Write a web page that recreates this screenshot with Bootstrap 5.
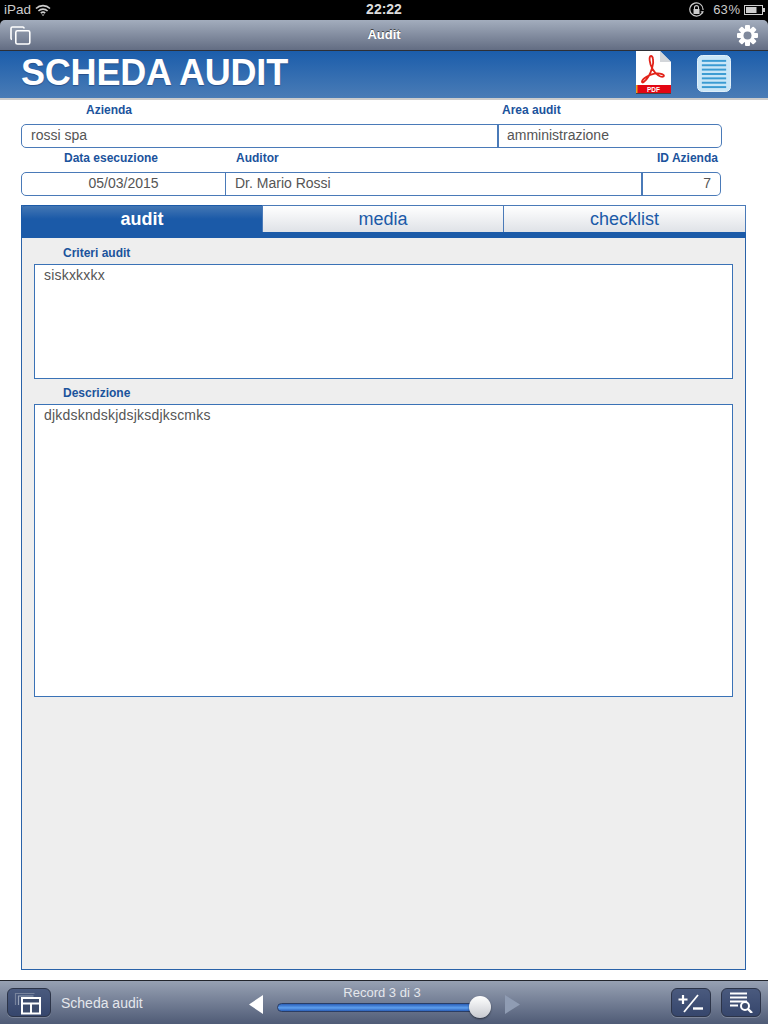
<!DOCTYPE html>
<html lang="it">
<head>
<meta charset="utf-8">
<title>Scheda audit</title>
<link href="https://cdn.jsdelivr.net/npm/bootstrap@5.3.0/dist/css/bootstrap.min.css" rel="stylesheet">
<style>
html,body{height:1024px;overflow:hidden;background:#fff}
body{font-family:"Liberation Sans",Arial,sans-serif;width:768px}
.shell{height:1024px}
.statusbar{height:20px;background:#000;color:#ccc;font-size:13.5px;line-height:18px;padding:0 3px 0 4px;flex:none;position:relative}
.statusbar .clock{position:absolute;left:0;right:0;text-align:center;color:#ddd;font-weight:700;font-size:14px;top:0}
.topnav{height:31px;flex:none;background:linear-gradient(#a3adbd,#636d83);border-bottom:1px solid #2d2f36;border-radius:5px 5px 0 0;color:#fff;padding:0 10px 0 10px;position:relative}
.topwrap{background:#000;flex:none}
.topnav .ttl{position:absolute;left:0;right:0;text-align:center;font-size:13px;font-weight:700;text-shadow:0 -1px 0 #444;line-height:30px}
.bluehead{height:47px;flex:none;background:linear-gradient(#1b5dab,#4a7cb6);padding:0 37px 0 21px}
.headtitle{font-size:36px;font-weight:700;color:#fff;letter-spacing:-.2px;line-height:44px;margin:-4px 0 0;text-shadow:0 1px 1px #28508a}
.headline{height:2px;flex:none;background:#ccc}
.fieldsbox{padding:0 0 0 21px;flex:none}
.lbl{font-size:12px;font-weight:700;color:#1b539c;line-height:14px}
.lblrow{height:24px;padding-top:3px}
.cellbox{height:24px;border:1px solid #4a7ab8;background:#fff;color:#555;font-size:14px;line-height:20px;padding:0 9px;margin-left:-1px;flex:none}
.cellbox:first-child{margin-left:0;border-radius:5px 0 0 5px}
.cellbox:last-child{border-radius:0 5px 5px 0}
.w-az{width:477px}.w-ar{width:225px;border-left-width:2px;padding-left:8px}
.w-da{width:205px;text-align:center}.w-au{width:417px}.w-id{width:80px;text-align:right;border-left-width:2px}
.l-az{padding-left:65px;width:481px}
.l-da{padding-left:43px;width:215px}.l-au{width:421px}
.panelbox{margin:9px 22px 0 21px;flex:1 1 auto;background:#eee;border:1px solid #2a62a8;min-height:0}
.tabstrip{height:27px;margin:-1px -1px 0;flex-wrap:nowrap}
.tabstrip .nav-item{flex:none}
.tabstrip .nav-link{height:27px;width:241px;padding:0;text-align:center;font-size:18px;line-height:26px;color:#1b5aa8;background:linear-gradient(#fff,#dfe2e7);border:1px solid #4a7ab8;border-width:1px 0 0 1px;border-radius:0}
.tabstrip .nav-item:last-child .nav-link{width:243px;border-right:1px solid #4a7ab8}
.tabstrip .nav-link.active{background:linear-gradient(#4477b4,#1b5aa8 50%);color:#fff;font-weight:700;border-color:#1b5aa8;border-radius:5px 0 0 0;height:27px}
.tabbar{height:6px;background:#1b5aa8;margin:0 -1px;flex:none}
.panelbody{padding:0 12px}
.lbl2{padding:8px 0 4px 29px;height:26px}
.lbl2.next{height:25px;padding-top:7px}
.boxarea{background:#fff;border:1px solid #3a72b6;color:#555;font-size:14px;line-height:20px;padding:0 9px;border-radius:0;letter-spacing:.2px}
.h1a{height:115px}.h2a{height:293px}
.footbar{height:44px;flex:none;background:linear-gradient(#97a1b3,#4f5b76);border-top:1px solid #22252c;position:relative;padding:7px;margin-top:10px}
.toolbtn{width:44px;height:29px;padding:0;border:1px solid #2c3448;border-radius:6px;background:linear-gradient(#4a5a7e,#36466c);flex:none;box-shadow:0 1px 0 rgba(255,255,255,.2)}
.toolbtn.narrow{width:40px}
.footlabel{color:#e4e7ec;font-size:14px;margin-left:10px;width:188px;flex:none;line-height:14px}
.slidewrap{width:203px;height:36px;position:relative;margin:0 14px;flex:none}
.recordtxt{font-size:13px;color:#e4e7ec;text-align:center;line-height:14px;margin-top:1px;padding-left:7px}
.tracker{height:9px;border-radius:5px;margin-top:3px;background:linear-gradient(#2a5fb8,#5fa0ee 55%,#2a5fb8);border:1px solid #2b3d63}
.knob{position:absolute;width:22px;height:22px;border-radius:50%;right:-11px;top:11px;background:linear-gradient(#fff,#c8cad0);box-shadow:0 1px 2px rgba(0,0,0,.5)}
.rightbtns{margin-left:auto}
.arrowpad{width:14px;flex:none;margin-top:3px}
.arrownext{margin-left:11px}
.btnnext{margin-left:10px}
.pct{font-size:13px;word-spacing:-3px}
.pageicon{margin-top:-4px}
.listicon{margin-left:26px;margin-top:-2px}
</style>
</head>
<body>
<div class="shell d-flex flex-column">

  <div class="statusbar d-flex align-items-center">
    <span>iPad</span>
    <svg class="ms-1" width="16" height="12" viewBox="0 0 16 12"><path d="M1 4.500a10 10 0 0 1 14 0M3.400 7a6.600 6.600 0 0 1 9.200 0M5.800 9.200a3.200 3.200 0 0 1 4.400 0" fill="none" stroke="#ccc" stroke-width="1.600"/><path d="M8 12l-1.500-1.600h3z" fill="#ccc"/></svg>
    <div class="clock">22:22</div>
    <div class="ms-auto d-flex align-items-center">
      <svg width="17" height="16" viewBox="0 0 16 16"><path d="M13.500 11A6.600 6.600 0 1 1 14.500 8" fill="none" stroke="#ccc" stroke-width="1.200"/><path d="M12 9.500l2.300 2.400.9-3z" fill="#ccc"/><rect x="5" y="7" width="6" height="5" fill="#ccc"/><path d="M6 7V5.600a2 2 0 0 1 4 0V7" fill="none" stroke="#ccc" stroke-width="1.100"/></svg>
      <span class="ms-2 pct">63 %</span>
      <svg class="ms-1" width="21" height="10" viewBox="0 0 21 10"><rect x=".5" y=".5" width="18" height="9" fill="none" stroke="#ccc"/><rect x="2" y="2" width="10.500" height="6" fill="#ccc"/><rect x="19" y="3" width="2" height="4" fill="#ccc"/></svg>
    </div>
  </div>

  <div class="topwrap">
    <div class="topnav d-flex align-items-center justify-content-between">
      <div class="ttl">Audit</div>
      <svg width="21" height="19" viewBox="0 0 21 19" fill="none" stroke="#fff" stroke-width="1.600"><path d="M14 2.500V2a1.200 1.200 0 0 0-1.200-1H2.400A1.400 1.400 0 0 0 1 2.400v9.800a1.200 1.200 0 0 0 1 1.200"/><rect x="5.800" y="4.800" width="14" height="13.200" rx="1.600"/></svg>
      <svg width="21" height="21" viewBox="0 0 20 20"><g fill="#fff"><circle cx="10" cy="10" r="7"/><rect x="7.600" y="0" width="4.800" height="20" rx="1"/><rect x="7.600" y="0" width="4.800" height="20" rx="1" transform="rotate(45 10 10)"/><rect x="7.600" y="0" width="4.800" height="20" rx="1" transform="rotate(90 10 10)"/><rect x="7.600" y="0" width="4.800" height="20" rx="1" transform="rotate(135 10 10)"/></g><circle cx="10" cy="10" r="3.800" fill="#7f899c"/></svg>
    </div>
  </div>

  <div class="bluehead d-flex align-items-center">
    <h1 class="headtitle">SCHEDA AUDIT</h1>
    <svg class="ms-auto pageicon" width="35" height="43" viewBox="0 0 35 43">
      <path d="M0 0h24l11 11v32H0z" fill="#fff"/>
      <path d="M24 0l11 11H24z" fill="#d3d6da"/>
      <rect x="0" y="34" width="35" height="8" fill="#e30613"/>
      <rect x="0" y="42" width="35" height="1" fill="#444"/>
      <rect x="0" y="34" width="1.500" height="8" fill="#f0a020"/>
      <path d="M15 5c-2.500 0-1.500 8 1.500 13 2.800 5 8.500 9 11 7.500 2-1.400-3-4-9-2.800-6 1.200-12 5-12.500 7.800-.3 2.500 3.500 0 6.500-5 2.800-4.600 5.500-13 4.500-17.500-.3-1.800-1.200-3-2-3z" fill="none" stroke="#e2231a" stroke-width="1.800"/>
      <text x="17.500" y="41" text-anchor="middle" font-size="6.500" font-weight="700" fill="#fff" font-family="Liberation Sans">PDF</text>
    </svg>
    <svg class="listicon" width="34" height="37" viewBox="0 0 35 38">
      <rect x="0.500" y="0.500" width="34" height="37" rx="5" fill="#c9e6f7" stroke="#e5f3fb"/>
      <g fill="#3a9bd2"><rect x="5" y="5" width="25" height="2"/><rect x="5" y="9.500" width="25" height="2"/><rect x="5" y="14" width="25" height="2"/><rect x="5" y="18.500" width="25" height="2"/><rect x="5" y="23" width="25" height="2"/><rect x="5" y="27.500" width="25" height="2"/><rect x="5" y="32" width="25" height="2"/></g>
    </svg>
  </div>
  <div class="headline"></div>

  <div class="fieldsbox">
    <div class="d-flex lblrow">
      <div class="lbl l-az">Azienda</div>
      <div class="lbl">Area audit</div>
    </div>
    <div class="d-flex">
      <div class="cellbox w-az">rossi spa</div>
      <div class="cellbox w-ar">amministrazione</div>
    </div>
    <div class="d-flex lblrow">
      <div class="lbl l-da">Data esecuzione</div>
      <div class="lbl l-au">Auditor</div>
      <div class="lbl">ID Azienda</div>
    </div>
    <div class="d-flex">
      <div class="cellbox w-da">05/03/2015</div>
      <div class="cellbox w-au">Dr. Mario Rossi</div>
      <div class="cellbox w-id">7</div>
    </div>
  </div>

  <div class="panelbox d-flex flex-column">
    <ul class="nav tabstrip">
      <li class="nav-item"><a class="nav-link active" href="#">audit</a></li>
      <li class="nav-item"><a class="nav-link" href="#">media</a></li>
      <li class="nav-item"><a class="nav-link" href="#">checklist</a></li>
    </ul>
    <div class="tabbar"></div>
    <div class="panelbody">
      <div class="lbl lbl2">Criteri audit</div>
      <div class="boxarea h1a">siskxkxkx</div>
      <div class="lbl lbl2 next">Descrizione</div>
      <div class="boxarea h2a">djkdskndskjdsjksdjkscmks</div>
    </div>
  </div>

  <div class="footbar d-flex align-items-center">
    <button class="btn toolbtn d-flex align-items-center justify-content-center" type="button" aria-label="Layout">
      <svg width="30" height="24" viewBox="0 0 30 24"><path d="M1.500 14V2.500h19" fill="none" stroke="#77839c" stroke-width="1.200"/><path d="M4.500 14V5h15" fill="none" stroke="#98a3b8" stroke-width="1.200"/><rect x="8" y="7" width="18" height="15.500" fill="#3d4c6c" stroke="#fff" stroke-width="2"/><path d="M8 12.500h18M17 12.500v10" stroke="#fff" stroke-width="2" fill="none"/></svg>
    </button>
    <div class="footlabel">Scheda audit</div>
    <div class="arrowpad"><svg width="14" height="19" viewBox="0 0 14 19" class="d-block"><path d="M0 9.500L14 0v19z" fill="#fff"/></svg></div>
    <div class="slidewrap">
      <div class="recordtxt">Record 3 di 3</div>
      <div class="tracker"></div>
      <div class="knob"></div>
    </div>
    <div class="arrowpad arrownext"><svg width="15" height="19" viewBox="0 0 15 19" class="d-block"><path d="M15 9.500L0 0v19z" fill="#8f9cb3"/></svg></div>
    <div class="rightbtns d-flex">
      <button class="btn toolbtn narrow d-flex align-items-center justify-content-center" type="button" aria-label="Aggiungi">
        <svg width="26" height="20" viewBox="0 0 26 20"><path d="M5 2v9M.5 6.500h9" stroke="#fff" stroke-width="2.200" fill="none"/><path d="M6 19L20 2" stroke="#fff" stroke-width="1.800" fill="none"/><path d="M15 15.500h10" stroke="#fff" stroke-width="2.400" fill="none"/></svg>
      </button>
      <button class="btn toolbtn narrow btnnext d-flex align-items-center justify-content-center" type="button" aria-label="Cerca">
        <svg width="24" height="21" viewBox="0 0 24 21"><path d="M1 1.500h17M1 5.500h17M1 9.500h17M1 13.500h8" stroke="#fff" stroke-width="2" fill="none"/><circle cx="16" cy="14" r="4" fill="#3d4c6c" stroke="#fff" stroke-width="2"/><path d="M19 17l4 4" stroke="#fff" stroke-width="2.400"/></svg>
      </button>
    </div>
  </div>
</div>
<script src="https://cdn.jsdelivr.net/npm/bootstrap@5.3.0/dist/js/bootstrap.bundle.min.js"></script>
</body>
</html>
